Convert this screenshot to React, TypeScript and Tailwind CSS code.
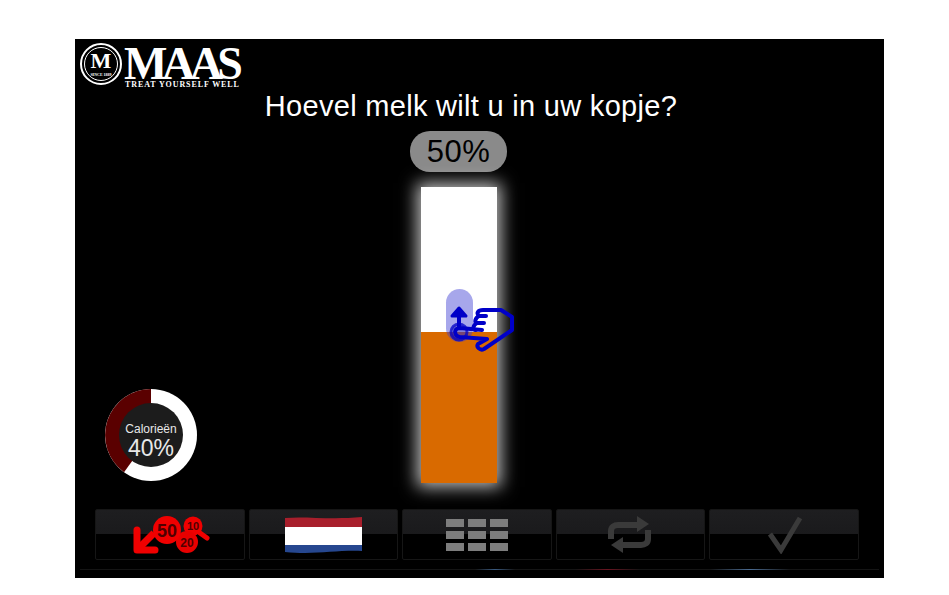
const sans = { fontFamily: '"Liberation Sans", Arial, sans-serif' }

function Logo() {
  return (
    <div className="flex items-start gap-[2px] pl-[5px] pt-[4px] h-[50px]">
      <div className="w-[42px] h-[42px] rounded-full border-2 border-white bg-black p-[2px] shrink-0">
        <div className="w-full h-full rounded-full border border-white flex flex-col items-center font-['Liberation_Serif',serif] text-white">
          <span className="text-[22px] leading-[22px] font-bold mt-[2px]">M</span>
          <span className="text-[4px] leading-[5px] font-bold whitespace-nowrap">SINCE 1889</span>
        </div>
      </div>
      <div className="flex flex-col items-start font-['Liberation_Serif',serif] text-white">
        <span className="text-[46px] leading-[32px] h-[32px] font-bold tracking-[-5.5px] mt-[5px]">MAAS</span>
        <span className="text-[8px] leading-[8px] font-bold tracking-[0.9px] whitespace-nowrap ml-[1px] mt-[1px]">TREAT YOURSELF WELL</span>
      </div>
    </div>
  )
}

function CalorieRing() {
  return (
    <div className="relative w-[92px] h-[92px]">
      <svg width="92" height="92" viewBox="0 0 92 92">
        <circle cx="46" cy="46" r="46" fill="#ffffff" />
        <path d="M46 46 L46 0 A46 46 0 0 0 19 83.2 Z" fill="#5a0000" />
        <circle cx="46" cy="46" r="32" fill="#1c1c1c" />
      </svg>
      <div className="absolute inset-0 flex flex-col items-center pt-[33px] text-[#e8e8e8]" style={sans}>
        <span className="text-[12px] leading-[14px]">Calorieën</span>
        <span className="text-[23px] leading-[24px]">40%</span>
      </div>
    </div>
  )
}

function TouchHint() {
  return (
    <svg className="absolute left-[-21px] top-[83px]" width="130" height="90" viewBox="0 0 130 90" fill="none">
      <rect x="46" y="19" width="27" height="53" rx="13.5" fill="#3c3cd2" fillOpacity="0.45" />
      <circle cx="59" cy="62" r="8" fill="#3c28a0" fillOpacity="0.3" stroke="#0000c8" strokeOpacity="0.75" strokeWidth="3" />
      <path d="M59 58 V45" stroke="#0000c8" strokeWidth="4" />
      <path d="M52 46 L59 38 L66 46 Z" fill="#0000c8" stroke="#0000c8" strokeWidth="3" strokeLinejoin="round" />
      <g stroke="#0000c8" strokeWidth="4" strokeLinejoin="round" strokeLinecap="round">
        <path d="M79 46 C76 43 78 40 83 40 L101 40 L112 47 L112 60 L84 79 C80 81 76 77 78 74 L87 69 L60 67 C54 66 53 58 60 58 L82 60" />
        <path d="M79 46 H86" />
        <path d="M79 46 C75 48 74 53 77 53 H84" />
        <path d="M77 53 C73 55 72 60 76 60" />
      </g>
    </svg>
  )
}

function CoinsIcon() {
  return (
    <svg width="90" height="50" viewBox="0 0 90 50" className="font-bold" style={sans}>
      <path d="M12 20 V40 H30" stroke="#f00000" strokeWidth="7" strokeLinecap="round" strokeLinejoin="round" fill="none" />
      <path d="M14 38 L29 23" stroke="#f00000" strokeWidth="7" />
      <path d="M75 23 L82 28" stroke="#f00000" strokeWidth="5" strokeLinecap="round" />
      <circle cx="68" cy="16" r="9.5" fill="#f00000" />
      <circle cx="62" cy="32" r="11" fill="#e80000" />
      <circle cx="42" cy="20" r="14" fill="#f00000" />
      <text x="42" y="26.5" textAnchor="middle" fontSize="18" fill="#500000">50</text>
      <text x="68" y="20" textAnchor="middle" fontSize="11" fill="#500000">10</text>
      <text x="62" y="36.5" textAnchor="middle" fontSize="12" fill="#500000">20</text>
    </svg>
  )
}

function FlagIcon() {
  return (
    <svg width="77" height="36" viewBox="0 0 77 36">
      <path d="M0 1 C20 -1 45 3 77 0 V10 H0 Z" fill="#a81f2c" />
      <rect x="0" y="10" width="77" height="18" fill="#ffffff" />
      <path d="M0 28 H77 V34 C50 33 30 38 0 35 Z" fill="#26478f" />
    </svg>
  )
}

function GridIcon() {
  return (
    <div className="grid grid-cols-3 gap-[4px]">
      {Array.from({ length: 9 }).map((_, i) => (
        <div key={i} className="w-[18px] h-[8px] bg-[#7d7d7d]" />
      ))}
    </div>
  )
}

function RepeatIcon() {
  return (
    <svg width="46" height="40" viewBox="0 0 46 40" fill="none">
      <path d="M4 24 V16 C4 12 7 10 11 10 H32" stroke="#3a3a3a" strokeWidth="6" />
      <path d="M30 1 L42 9 L30 17 Z" fill="#3a3a3a" />
      <path d="M41 15 V24 C41 28 38 30 34 30 H14" stroke="#3a3a3a" strokeWidth="6" />
      <path d="M16 22 L4 30 L16 38 Z" fill="#3a3a3a" />
    </svg>
  )
}

function CheckIcon() {
  return (
    <svg className="ml-[3px]" width="36" height="38" viewBox="0 0 36 38" fill="none">
      <path d="M3 18 L14 34 L33 2" stroke="#3a3a3a" strokeWidth="5" />
    </svg>
  )
}

function BarButton({ children }: { children: React.ReactNode }) {
  return (
    <div className="w-[149.5px] h-[51px] rounded-[2px] border border-[#161616] bg-[linear-gradient(#1e1e20_0,#1a1a1c_49%,#000000_50%,#000000_100%)] flex items-center justify-center">
      {children}
    </div>
  )
}

export default function App() {
  return (
    <div className="min-h-screen bg-white pt-[39px] pl-[75px]" style={sans}>
      <div className="w-[809px] h-[539px] bg-black flex flex-col">
        <Logo />
        <h1 className="text-[29px] leading-[34px] tracking-[0.3px] text-white text-center pr-[17px] font-normal whitespace-nowrap">Hoevel melk wilt u in uw kopje?</h1>

        <div className="flex flex-1 mt-[8px]">
          <div className="w-[335px] flex items-end pl-[30px] pb-[2px]">
            <CalorieRing />
          </div>
          <div className="flex flex-col items-center w-[97px]">
            <div className="w-[97px] h-[41px] shrink-0 rounded-[20px] bg-[#8a8a8a] text-black text-[31px] leading-[42px] tracking-[0.5px] text-center">50%</div>
            <div className="relative w-[76px] h-[296px] mt-[15px] bg-white shadow-[0_0_16px_4px_rgba(255,255,255,0.75)] flex flex-col">
              <div className="h-[145px] bg-white" />
              <div className="flex-1 bg-[#d96a00]" />
              <TouchHint />
            </div>
          </div>
        </div>

        <div className="flex gap-[4px] pl-[20px] pt-[26px]">
          <BarButton><CoinsIcon /></BarButton>
          <BarButton><FlagIcon /></BarButton>
          <BarButton><GridIcon /></BarButton>
          <BarButton><RepeatIcon /></BarButton>
          <BarButton><CheckIcon /></BarButton>
        </div>
        <div className="flex mt-[9px] mb-[8px] ml-[5px] w-[799px] h-[1px] shrink-0 bg-[#141414]">
          <div className="ml-[395px] w-[40px] bg-[linear-gradient(90deg,#141414,#3a5a80,#141414)]" />
          <div className="ml-[60px] w-[65px] bg-[linear-gradient(90deg,#141414,#6a1420,#141414)]" />
          <div className="ml-[70px] w-[80px] bg-[linear-gradient(90deg,#141414,#4a6a90,#141414)]" />
        </div>
      </div>
    </div>
  )
}
